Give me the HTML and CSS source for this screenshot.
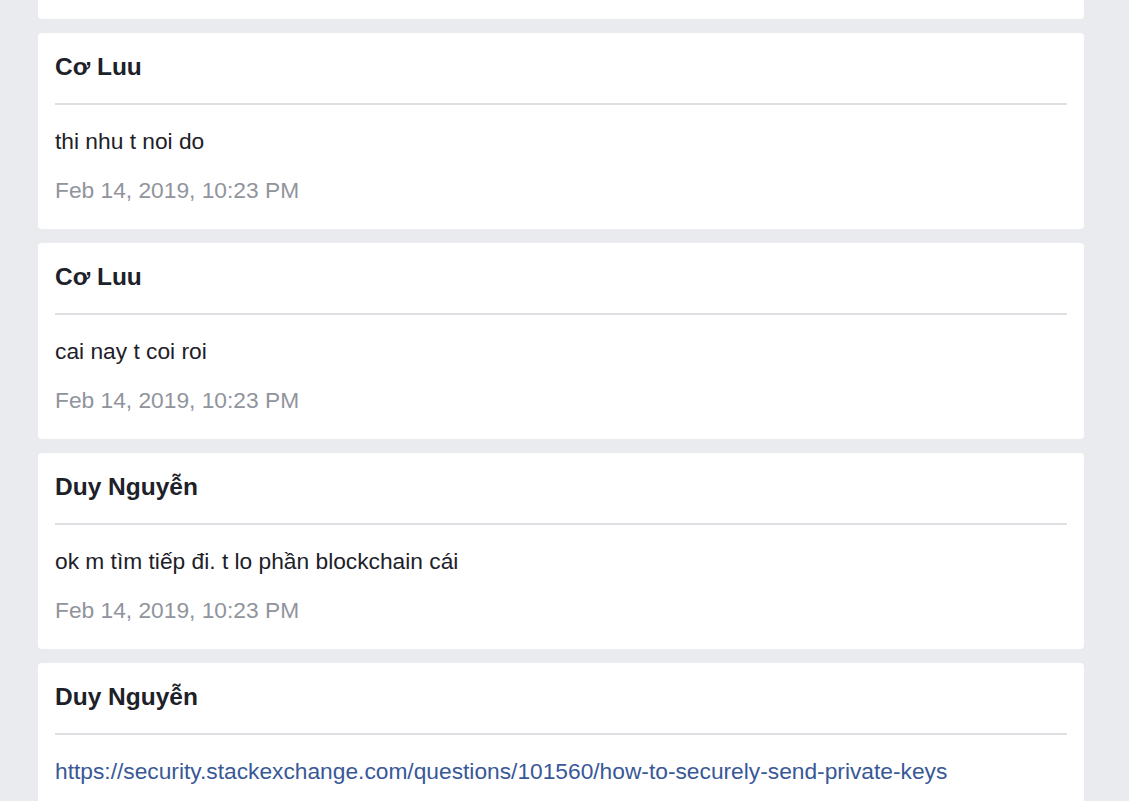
FILE: index.html
```html
<!DOCTYPE html>
<html lang="vi">
<head>
<meta charset="utf-8">
<title>Messages</title>
<link rel="stylesheet" href="styles.css">
</head>
<body>
<div class="feed">
  <div class="card card-previous"></div>
  <div class="card">
    <div class="author">Cơ Luu</div>
    <hr class="divider">
    <div class="message">thi nhu t noi do</div>
    <div class="date">Feb 14, 2019, 10:23 PM</div>
  </div>
  <div class="card">
    <div class="author">Cơ Luu</div>
    <hr class="divider">
    <div class="message">cai nay t coi roi</div>
    <div class="date">Feb 14, 2019, 10:23 PM</div>
  </div>
  <div class="card">
    <div class="author">Duy Nguyễn</div>
    <hr class="divider">
    <div class="message">ok m tìm tiếp đi. t lo phần blockchain cái</div>
    <div class="date">Feb 14, 2019, 10:23 PM</div>
  </div>
  <div class="card">
    <div class="author">Duy Nguyễn</div>
    <hr class="divider">
    <div class="message"><a class="link" href="#">https://security.stackexchange.com/questions/101560/how-to-securely-send-private-keys</a></div>
  </div>
</div>
</body>
</html>
```

FILE: styles.css
```css
html, body {
  margin: 0;
  padding: 0;
  background: #e9ebee;
  overflow: hidden;
}

body {
  font-family: "Liberation Sans", Arial, Helvetica, sans-serif;
  color: #1d2129;
}

.feed {
  width: 1046px;
  margin: -177px 0 0 38px;
  display: flex;
  flex-direction: column;
  gap: 14px;
}

.card {
  background: #ffffff;
  border-radius: 4px;
  padding: 20px 17px 26px;
}

.card-previous {
  height: 150px;
}

.author {
  font-size: 24.5px;
  line-height: 28px;
  font-weight: bold;
  color: #1d2129;
}

.divider {
  border: 0;
  height: 2px;
  background: #dddfe2;
  margin: 22px 0 23px;
}

.message {
  font-size: 22.75px;
  line-height: 26px;
  margin-bottom: 23px;
  color: #1d2129;
}

.link {
  color: #385898;
  text-decoration: none;
}

.date {
  font-size: 22.75px;
  line-height: 26px;
  color: #90949c;
}
```
